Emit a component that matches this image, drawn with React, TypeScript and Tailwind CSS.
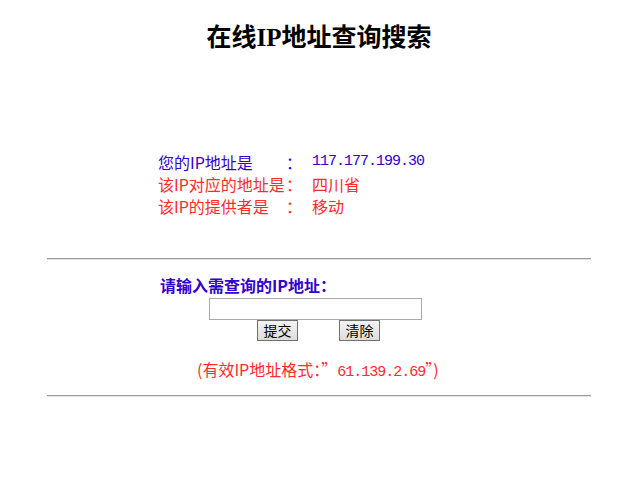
const cjk = "font-['Noto_Sans_CJK_SC',sans-serif]";
const num = "font-['Liberation_Mono',monospace] text-[15px] tracking-[-1px]";

function Rule() {
  return <div className="w-[544px] border-t border-t-[#9a9a9a] border-b border-b-[#e4e4e4]" />;
}

function InfoRow({
  label,
  value,
  color,
  mono,
}: {
  label: string;
  value: string;
  color: string;
  mono?: boolean;
}) {
  return (
    <div className={`flex h-[22px] items-center text-[16px] leading-[22px] ${color}`}>
      <span className="w-[126px] whitespace-nowrap">{label}</span>
      <span className="w-[28px] pl-[2px]">：</span>
      <span className={mono ? num : ""}>{value}</span>
    </div>
  );
}

export default function App() {
  return (
    <div className={`min-h-[491px] bg-white ${cjk}`}>
      <div className="ml-[47px] w-[544px]">
        <h1 className="pt-[22px] text-center font-['Liberation_Serif','Noto_Sans_CJK_SC',serif] text-[25px] font-bold leading-[32px] text-black">
          在线IP地址查询搜索
        </h1>

        <div className="mt-[97px] pl-[111px]">
          <InfoRow label="您的IP地址是" value="117.177.199.30" color="text-[#3300cc]" mono />
          <InfoRow label="该IP对应的地址是" value="四川省" color="text-[#ff2a2a]" />
          <InfoRow label="该IP的提供者是" value="移动" color="text-[#ff2a2a]" />
        </div>

        <div className="mt-[41px]">
          <Rule />
        </div>

        <div className="mt-[14px] pl-[113px] text-[16px] font-bold leading-[22px] text-[#3300cc]">
          请输入需查询的IP地址：
        </div>

        <div className="mt-[2px] pl-[162px]">
          <input
            type="text"
            className="block h-[22px] w-[213px] border border-[#a9a9a9] bg-white px-1 text-[14px] outline-none"
          />
        </div>

        <div className="flex pl-[210px]">
          <button className="h-[21px] w-[41px] border border-[#707070] bg-gradient-to-b from-[#f4f4f4] to-[#dcdcdc] text-[14px] leading-[19px] text-black">
            提交
          </button>
          <button className="ml-[41px] h-[21px] w-[41px] border border-[#707070] bg-gradient-to-b from-[#f4f4f4] to-[#dcdcdc] text-[14px] leading-[19px] text-black">
            清除
          </button>
        </div>

        <div className="mt-[17px] pl-[150px] text-[16px] leading-[22px] text-[#ff2a2a] whitespace-nowrap">
          (有效IP地址格式：”<span className={num}>61.139.2.69</span>”)
        </div>

        <div className="mt-[11px]">
          <Rule />
        </div>
      </div>
    </div>
  );
}
